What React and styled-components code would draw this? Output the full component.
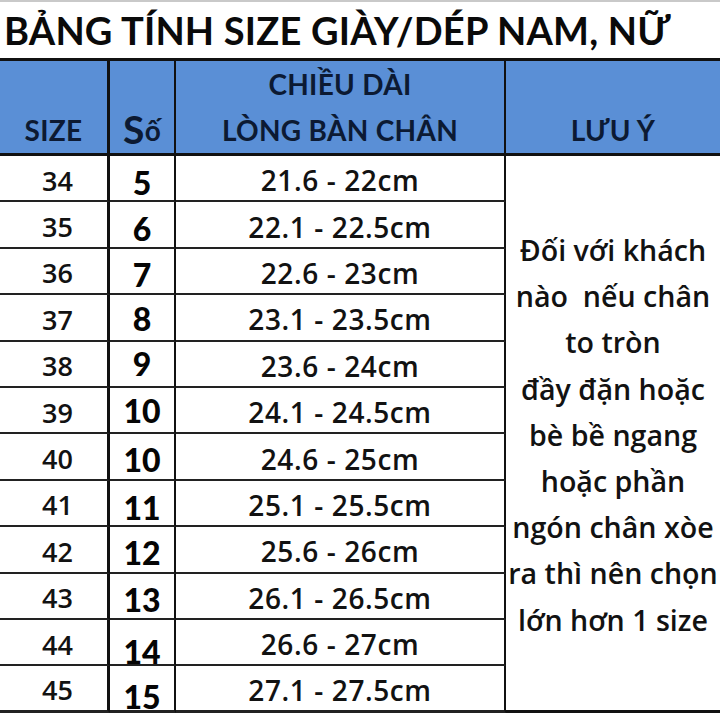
import styled, { createGlobalStyle } from "styled-components";

const rows = [
	{ eu: "34", no: "5", len: "21.6 - 22cm", shift: 9 },
	{ eu: "35", no: "6", len: "22.1 - 22.5cm", shift: 7 },
	{ eu: "36", no: "7", len: "22.6 - 23cm", shift: 8 },
	{ eu: "37", no: "8", len: "23.1 - 23.5cm", shift: 3 },
	{ eu: "38", no: "9", len: "23.6 - 24cm", shift: 0 },
	{ eu: "39", no: "10", len: "24.1 - 24.5cm", shift: 0 },
	{ eu: "40", no: "10", len: "24.6 - 25cm", shift: 6 },
	{ eu: "41", no: "11", len: "25.1 - 25.5cm", shift: 10 },
	{ eu: "42", no: "12", len: "25.6 - 26cm", shift: 7 },
	{ eu: "43", no: "13", len: "26.1 - 26.5cm", shift: 8 },
	{ eu: "44", no: "14", len: "26.6 - 27cm", shift: 19 },
	{ eu: "45", no: "15", len: "27.1 - 27.5cm", shift: 17 },
];

const note = [
	"Đối với khách",
	"nào\u00a0 nếu chân",
	"to tròn",
	"đầy đặn hoặc",
	"bè bề ngang",
	"hoặc phần",
	"ngón chân xòe",
	"ra thì nên chọn",
	"lớn hơn 1 size",
];

function App() {
	return (
		<>
			<GlobalStyle />
			<Page>
				<Title>BẢNG TÍNH SIZE GIÀY/DÉP NAM, NỮ</Title>
				<Table>
					<HeadCell $right={3}>SIZE</HeadCell>
					<HeadCell $right={2} $inline>
						<BigS>S</BigS>ố
					</HeadCell>
					<HeadCell $right={2}>
						<span>CHIỀU DÀI</span>
						<span>LÒNG BÀN CHÂN</span>
					</HeadCell>
					<HeadCell $right={0}>LƯU Ý</HeadCell>

					{rows.map((r, i) => (
						<Row key={r.eu} r={r} last={i === rows.length - 1} />
					))}

					<NoteCell>
						{note.map((line) => (
							<NoteLine key={line}>{line}</NoteLine>
						))}
					</NoteCell>
				</Table>
			</Page>
		</>
	);
}

function Row({ r, last }) {
	return (
		<>
			<SizeCell $last={last}>{r.eu}</SizeCell>
			<NumberCell $last={last} style={{ paddingTop: r.shift }}>
				{r.no}
			</NumberCell>
			<LengthCell $last={last}>{r.len}</LengthCell>
		</>
	);
}

export default App;

const GlobalStyle = createGlobalStyle`
	body {
		margin: 0;
		background: #fff;
		font-family: Lato, "Open Sans", sans-serif;
	}
`;

const Page = styled.div`
	width: 720px;
	height: 720px;
	overflow: hidden;
	box-sizing: border-box;
	border-top: 2px solid #c9c9c9;
	display: flex;
	flex-direction: column;
`;

const Title = styled.h1`
	margin: 0;
	height: 56px;
	box-sizing: border-box;
	padding: 5px 0 0 4px;
	font-size: 38px;
	font-weight: 700;
	line-height: 46px;
	color: #0a0a0a;
	white-space: nowrap;
	letter-spacing: 0.2px;
`;

const Table = styled.div`
	display: grid;
	grid-template-columns: 110px 66px 330px 1fr;
	grid-template-rows: 98px repeat(12, 46.4px);
	color: #111;
`;

const HeadCell = styled.div`
	background: #5a8fd6;
	border-top: 3px solid #111;
	border-bottom: 3px solid #111;
	border-right: ${(p) => p.$right}px solid #111;
	box-sizing: border-box;
	display: flex;
	flex-direction: ${(p) => (p.$inline ? "row" : "column")};
	justify-content: ${(p) => (p.$inline ? "center" : "flex-end")};
	align-items: ${(p) => (p.$inline ? "flex-end" : "center")};
	padding-bottom: 6px;
	gap: ${(p) => (p.$inline ? 0 : 12)}px;
	font-size: 28px;
	font-weight: 700;
	line-height: 34px;
	letter-spacing: 0.3px;
	color: #0c1a33;
	white-space: nowrap;
`;

const BigS = styled.span`
	font-size: 39px;
	line-height: 38px;
	margin-bottom: -1px;
`;

const BodyCell = styled.div`
	box-sizing: border-box;
	border-bottom: ${(p) => (p.$last ? 3 : 2)}px solid #222;
	display: flex;
	justify-content: center;
	align-items: center;
	font-family: "Open Sans", Lato, sans-serif;
	font-weight: 600;
	white-space: nowrap;
	color: #121212;
`;

const SizeCell = styled(BodyCell)`
	border-right: 3px solid #111;
	font-size: 27px;
	padding-left: 8px;
	padding-top: 4px;
`;

const NumberCell = styled(BodyCell)`
	border-right: 2px solid #111;
	font-family: Lato, sans-serif;
	font-size: 32px;
	font-weight: 900;
	color: #050505;
`;

const LengthCell = styled(BodyCell)`
	border-right: 2px solid #111;
	font-size: 28px;
	letter-spacing: 0.6px;
	padding-top: 4px;
`;

const NoteCell = styled.div`
	grid-column: 4;
	grid-row: 2 / span 12;
	border-bottom: 3px solid #111;
	display: flex;
	flex-direction: column;
	justify-content: center;
	align-items: center;
	padding-top: 4px;
`;

const NoteLine = styled.div`
	font-family: "Open Sans", Lato, sans-serif;
	font-size: 28.6px;
	font-weight: 600;
	line-height: 46.2px;
	white-space: nowrap;
	color: #121212;
`;
